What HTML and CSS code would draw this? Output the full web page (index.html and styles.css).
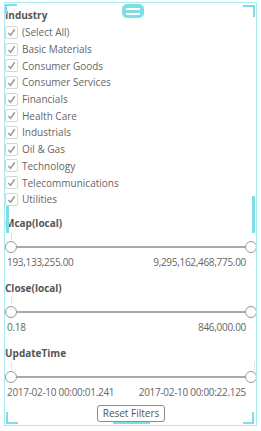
FILE: index.html
```html
<!DOCTYPE html>
<html lang="en">
<head>
    <meta charset="UTF-8">
    <meta name="viewport" content="width=device-width, initial-scale=1.0">
    <title>Filters</title>
    <link rel="stylesheet" href="styles.css">
</head>
<body>
    <div class="panel">
        <div class="title">Industry</div>
        <ul class="checklist">
            <li><span class="box"><svg viewBox="0 0 12 12"><polyline points="2.5,6.5 5,9 9.5,2.5"/></svg></span>(Select All)</li>
            <li><span class="box"><svg viewBox="0 0 12 12"><polyline points="2.5,6.5 5,9 9.5,2.5"/></svg></span>Basic Materials</li>
            <li><span class="box"><svg viewBox="0 0 12 12"><polyline points="2.5,6.5 5,9 9.5,2.5"/></svg></span>Consumer Goods</li>
            <li><span class="box"><svg viewBox="0 0 12 12"><polyline points="2.5,6.5 5,9 9.5,2.5"/></svg></span>Consumer Services</li>
            <li><span class="box"><svg viewBox="0 0 12 12"><polyline points="2.5,6.5 5,9 9.5,2.5"/></svg></span>Financials</li>
            <li><span class="box"><svg viewBox="0 0 12 12"><polyline points="2.5,6.5 5,9 9.5,2.5"/></svg></span>Health Care</li>
            <li><span class="box"><svg viewBox="0 0 12 12"><polyline points="2.5,6.5 5,9 9.5,2.5"/></svg></span>Industrials</li>
            <li><span class="box"><svg viewBox="0 0 12 12"><polyline points="2.5,6.5 5,9 9.5,2.5"/></svg></span>Oil &amp; Gas</li>
            <li><span class="box"><svg viewBox="0 0 12 12"><polyline points="2.5,6.5 5,9 9.5,2.5"/></svg></span>Technology</li>
            <li><span class="box"><svg viewBox="0 0 12 12"><polyline points="2.5,6.5 5,9 9.5,2.5"/></svg></span>Telecommunications</li>
            <li><span class="box"><svg viewBox="0 0 12 12"><polyline points="2.5,6.5 5,9 9.5,2.5"/></svg></span>Utilities</li>
        </ul>

        <div class="range first">
            <div class="title">Mcap(local)</div>
            <div class="slider"><span class="thumb tick-left"></span><span class="track"></span><span class="thumb"></span></div>
            <div class="values"><span>193,133,255.00</span><span>9,295,162,468,775.00</span></div>
        </div>

        <div class="range">
            <div class="title">Close(local)</div>
            <div class="slider"><span class="thumb tick-left"></span><span class="track"></span><span class="thumb"></span></div>
            <div class="values"><span>0.18</span><span>846,000.00</span></div>
        </div>

        <div class="range">
            <div class="title">UpdateTime</div>
            <div class="slider"><span class="thumb tick-left"></span><span class="track"></span><span class="thumb tick-right"></span></div>
            <div class="values"><span>2017-02-10 00:00:01.241</span><span>2017-02-10 00:00:22.125</span></div>
        </div>

        <div class="actions">
            <button class="reset">Reset Filters</button>
        </div>
    </div>

    <!-- selection frame drawn over the panel -->
    <div class="frame">
        <span class="corner tl"></span>
        <span class="corner tr"></span>
        <span class="corner bl"></span>
        <span class="corner br"></span>
        <span class="grip top"></span>
        <span class="grip left"></span>
        <span class="grip right"></span>
        <span class="grip bottom"></span>
    </div>
</body>
</html>
```

FILE: styles.css
```css
body {
    margin: 0;
    width: 261px;
    height: 431px;
    overflow: hidden;
    background-color: #fff;
    font-family: 'Open Sans', sans-serif;
    font-size: 10px;
    color: #666;
    position: relative;
}

.panel {
    padding: 9px 4px 0 5px;
}

.title {
    font-weight: bold;
    color: #555;
    line-height: 12px;
    height: 12px;
}

.checklist {
    list-style: none;
    margin: 3px 0 0;
    padding: 0;
}

.checklist li {
    display: flex;
    align-items: center;
    height: 16.7px;
    color: #666;
}

.box {
    width: 11px;
    height: 11px;
    border: 1px solid #d6d6d6;
    border-radius: 2px;
    background-color: #fff;
    margin-right: 4px;
    flex: none;
    position: relative;
    z-index: 2;
}

.box svg {
    width: 11px;
    height: 11px;
    display: block;
}

.box polyline {
    fill: none;
    stroke: #9a9a9a;
    stroke-width: 1.6;
}

.range {
    margin-top: 13px;
}

.range.first {
    margin-top: 9px;
}

.slider {
    display: flex;
    align-items: center;
    height: 14px;
    margin-top: 11px;
}

.thumb {
    width: 10px;
    height: 10px;
    border: 1.5px solid #999;
    border-radius: 50%;
    background-color: #fff;
    flex: none;
    position: relative;
}

.tick-left::before,
.tick-right::before {
    content: "";
    position: absolute;
    bottom: 12px;
    width: 1px;
    height: 8px;
    background-color: #e4e4e4;
}

.tick-left::before {
    left: 5px;
}

.tick-right::before {
    left: 8px;
}

.track {
    flex: 1;
    height: 2px;
    background-color: #aaa;
}

.values {
    display: flex;
    justify-content: space-between;
    padding: 0 11px 0 2px;
    line-height: 14px;
    margin-top: 1px;
    white-space: nowrap;
    letter-spacing: -0.3px;
}

.actions {
    display: flex;
    justify-content: center;
    margin-top: 6px;
}

.reset {
    font-family: 'Open Sans', sans-serif;
    font-size: 10px;
    color: #555;
    background-color: #fff;
    border: 1px solid #8c8c8c;
    border-radius: 3px;
    height: 17px;
    padding: 0 5px;
    line-height: 15px;
}

.frame {
    position: absolute;
    left: 4px;
    top: 2px;
    width: 251px;
    height: 422px;
    border: 1px solid #a9e8ed;
    pointer-events: none;
}

.corner {
    position: absolute;
    border-color: #7fdde5;
    border-style: solid;
    border-width: 0;
}

.corner.tl { left: 0; top: 1px; width: 10px; height: 8px; border-top-width: 2px; border-left-width: 2px; }
.corner.tr { right: 1px; top: 2px; width: 10px; height: 10px; border-top-width: 2px; border-right-width: 2px; }
.corner.bl { left: 1px; bottom: 1px; width: 10px; height: 10px; border-bottom-width: 2px; border-left-width: 2px; }
.corner.br { right: 2px; bottom: 1px; width: 9px; height: 10px; border-bottom-width: 2px; border-right-width: 2px; }

.grip {
    position: absolute;
    background-color: #7fdde5;
}

.grip.top {
    left: 117px;
    top: 1px;
    width: 22px;
    height: 14px;
    border-radius: 5px;
    background-image: linear-gradient(#fff, #fff), linear-gradient(#fff, #fff);
    background-size: 14px 2px, 14px 2px;
    background-position: 4px 4px, 4px 9px;
    background-repeat: no-repeat;
}

.grip.left {
    left: 1px;
    top: 193px;
    width: 3px;
    height: 37px;
    z-index: 1;
}

.grip.right {
    right: 1px;
    top: 193px;
    width: 3px;
    height: 37px;
}

.grip.bottom {
    left: 108px;
    bottom: 1px;
    width: 37px;
    height: 2px;
}
```
